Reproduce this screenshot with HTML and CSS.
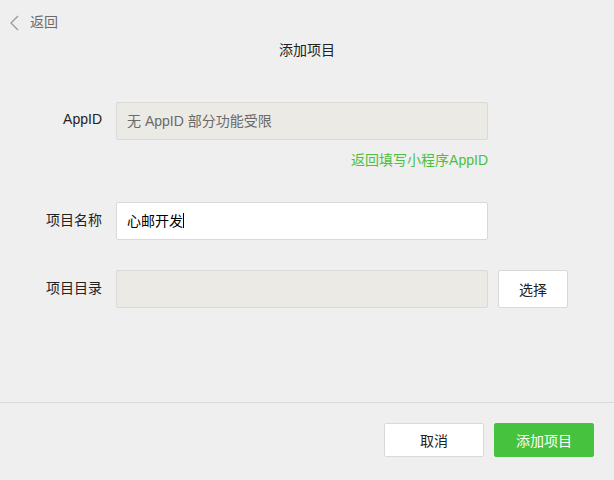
FILE: index.html
```html
<!DOCTYPE html>
<html lang="zh-CN">
<head>
    <meta charset="UTF-8">
    <title>添加项目</title>
    <link rel="stylesheet" href="styles.css">
</head>
<body>
    <div class="page">
        <div class="main">
            <div class="topbar">
                <a class="back" href="#">
                    <svg class="back-icon" width="9" height="16" viewBox="0 0 9 16">
                        <polyline points="8,1 1,8 8,15" fill="none" stroke="#9a9a9a" stroke-width="1.3"/>
                    </svg>
                    <span>返回</span>
                </a>
            </div>
            <h1 class="title">添加项目</h1>

            <div class="form">
                <div class="form-row">
                    <label class="form-label">AppID</label>
                    <div class="form-field disabled">无 AppID 部分功能受限</div>
                </div>
                <div class="form-tip">
                    <a class="link" href="#">返回填写小程序AppID</a>
                </div>

                <div class="form-row row-name">
                    <label class="form-label">项目名称</label>
                    <div class="form-field">心邮开发<span class="caret"></span></div>
                </div>

                <div class="form-row row-dir">
                    <label class="form-label">项目目录</label>
                    <div class="form-field disabled"></div>
                    <button class="btn btn-select">选择</button>
                </div>
            </div>
        </div>

        <div class="footer">
            <button class="btn btn-default">取消</button>
            <button class="btn btn-primary">添加项目</button>
        </div>
    </div>
</body>
</html>
```

FILE: styles.css
```css
* {
    box-sizing: border-box;
}
body {
    margin: 0;
    background-color: #efefef;
    font-family: "Liberation Sans", "Noto Sans CJK SC", sans-serif;
    font-size: 14px;
    color: #353535;
}
.page {
    height: 480px;
    display: flex;
    flex-direction: column;
}
.main {
    flex: 1;
}
.topbar {
    padding: 12px 0 0 10px;
    height: 32px;
}
.back {
    display: flex;
    align-items: center;
    gap: 11px;
    line-height: 20px;
    color: #6b6b6b;
    text-decoration: none;
}
.back-icon {
    margin-top: 1px;
}
.title {
    margin: 8px 0 0;
    font-size: 14px;
    font-weight: normal;
    line-height: 20px;
    text-align: center;
    color: #222;
}
.form {
    margin-top: 42px;
}
.form-row {
    display: flex;
    align-items: center;
}
.form-label {
    width: 102px;
    margin-right: 14px;
    text-align: right;
    color: #222;
    padding-bottom: 4px;
}
.form-field {
    width: 372px;
    height: 38px;
    padding: 0 10px;
    line-height: 36px;
    background-color: #fff;
    border: 1px solid #d9d9d9;
    border-radius: 2px;
    color: #000;
}
.form-field.disabled {
    background-color: #ebeae5;
    color: #6a6a6a;
}
.caret {
    display: inline-block;
    width: 1px;
    height: 15px;
    background-color: #000;
    vertical-align: -2px;
}
.form-tip {
    width: 488px;
    margin-top: 10px;
    text-align: right;
    line-height: 20px;
}
.link {
    color: #4dbf3e;
    text-decoration: none;
}
.row-name {
    margin-top: 32px;
}
.row-dir {
    margin-top: 30px;
}
.btn {
    font-family: inherit;
    font-size: 14px;
    border: 1px solid #d9d9d9;
    border-radius: 2px;
    background-color: #fff;
    color: #222;
    cursor: pointer;
}
.btn-select {
    width: 70px;
    height: 38px;
    margin-left: 10px;
}
.footer {
    height: 78px;
    border-top: 1px solid #d9d9d9;
    display: flex;
    justify-content: flex-end;
    gap: 10px;
    padding: 20px 20px 0 0;
}
.btn-default,
.btn-primary {
    width: 100px;
    height: 34px;
}
.btn-primary {
    background-color: #46c23e;
    border-color: #46c23e;
    color: #fff;
}
```
